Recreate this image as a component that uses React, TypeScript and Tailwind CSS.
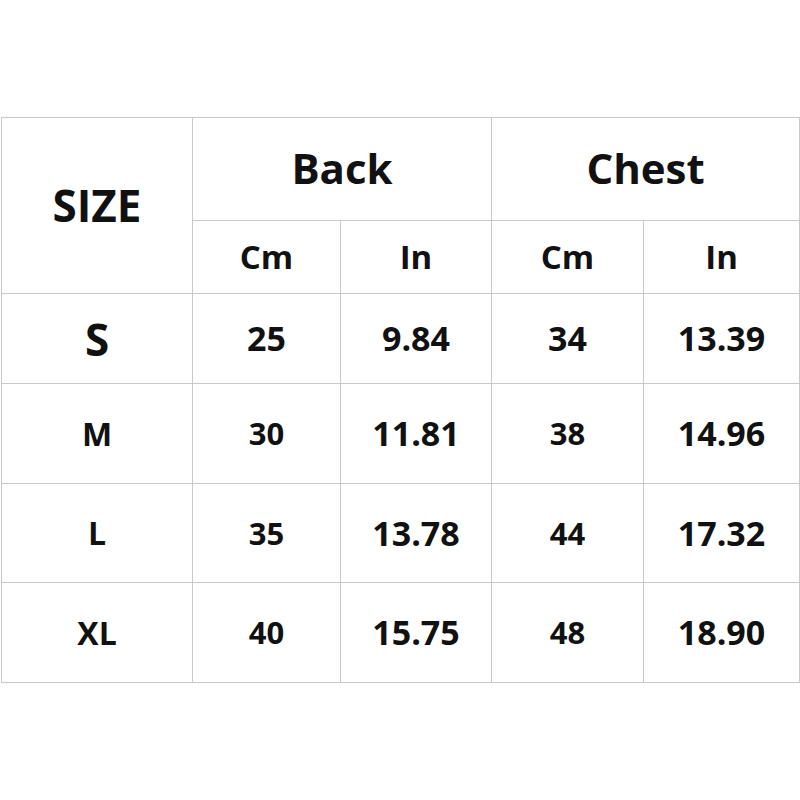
const rows = [
  { size: "S", backCm: "25", backIn: "9.84", chestCm: "34", chestIn: "13.39" },
  { size: "M", backCm: "30", backIn: "11.81", chestCm: "38", chestIn: "14.96" },
  { size: "L", backCm: "35", backIn: "13.78", chestCm: "44", chestIn: "17.32" },
  { size: "XL", backCm: "40", backIn: "15.75", chestCm: "48", chestIn: "18.90" },
];

const rowHeights = ["h-[90px]", "h-[100px]", "h-[99px]", "h-[100px]"];

export default function App() {
  return (
    <div
      className="w-[800px] h-[800px] bg-white pt-[117px] pl-[1px] text-[#111]"
      style={{ fontFamily: '"Open Sans", "Noto Sans", sans-serif' }}
    >
      <table className="border-collapse table-fixed w-[798px] font-bold text-center">
        <colgroup>
          <col className="w-[191px]" />
          <col className="w-[148px]" />
          <col className="w-[151px]" />
          <col className="w-[152px]" />
          <col className="w-[156px]" />
        </colgroup>
        <thead>
          <tr className="h-[103px]">
            <th rowSpan={2} className="border border-[#c9c9c9] text-[44px] pb-[2px]">
              SIZE
            </th>
            <th colSpan={2} className="border border-[#c9c9c9] text-[42px] pb-[3px]">
              Back
            </th>
            <th colSpan={2} className="border border-[#c9c9c9] text-[42px] pb-[3px]">
              Chest
            </th>
          </tr>
          <tr className="h-[73px] text-[33px]">
            <th className="border border-[#c9c9c9]">Cm</th>
            <th className="border border-[#c9c9c9]">In</th>
            <th className="border border-[#c9c9c9]">Cm</th>
            <th className="border border-[#c9c9c9]">In</th>
          </tr>
        </thead>
        <tbody>
          {rows.map((r, i) => {
            const first = i === 0;
            const cm = first ? "text-[34px]" : "text-[31px]";
            const inch = first ? "text-[34px]" : "text-[34px]";
            return (
              <tr key={r.size} className={rowHeights[i]}>
                <td
                  className={`border border-[#c9c9c9] ${
                    first ? "text-[44px]" : "text-[32px]"
                  }`}
                >
                  {r.size}
                </td>
                <td className={`border border-[#c9c9c9] ${cm}`}>{r.backCm}</td>
                <td className={`border border-[#c9c9c9] ${inch}`}>{r.backIn}</td>
                <td className={`border border-[#c9c9c9] ${cm}`}>{r.chestCm}</td>
                <td className={`border border-[#c9c9c9] ${inch}`}>{r.chestIn}</td>
              </tr>
            );
          })}
        </tbody>
      </table>
    </div>
  );
}
